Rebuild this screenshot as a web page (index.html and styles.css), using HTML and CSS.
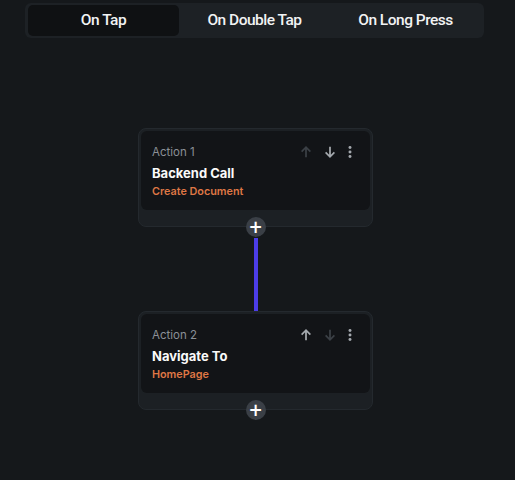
FILE: index.html
```html
<!DOCTYPE html>
<html lang="en">
<head>
    <meta charset="UTF-8">
    <meta name="viewport" content="width=device-width, initial-scale=1.0">
    <title>Action Flow</title>
    <link rel="stylesheet" href="styles.css">
</head>
<body>
    <div class="page">
        <div class="tabs">
            <div class="tab active">On Tap</div>
            <div class="tab">On Double Tap</div>
            <div class="tab">On Long Press</div>
        </div>

        <div class="flow">
            <div class="action">
                <div class="action-body">
                    <div class="action-head">
                        <span class="action-label">Action 1</span>
                        <div class="action-tools">
                            <svg class="tool dim" viewBox="0 0 16 16"><path d="M8 14V2.5M3 7.5 8 2.5l5 5"/></svg>
                            <svg class="tool" viewBox="0 0 16 16"><path d="M8 2V13.5M3 8.5 8 13.5l5-5"/></svg>
                            <svg class="tool dots" viewBox="0 0 16 16"><circle cx="8" cy="2.8" r="1.7"/><circle cx="8" cy="8" r="1.7"/><circle cx="8" cy="13.2" r="1.7"/></svg>
                        </div>
                    </div>
                    <div class="action-title">Backend Call</div>
                    <div class="action-sub">Create Document</div>
                </div>
                <div class="action-foot"></div>
                <button class="add-btn">+</button>
            </div>

            <div class="connector"></div>

            <div class="action">
                <div class="action-body">
                    <div class="action-head">
                        <span class="action-label">Action 2</span>
                        <div class="action-tools">
                            <svg class="tool" viewBox="0 0 16 16"><path d="M8 14V2.5M3 7.5 8 2.5l5 5"/></svg>
                            <svg class="tool dim" viewBox="0 0 16 16"><path d="M8 2V13.5M3 8.5 8 13.5l5-5"/></svg>
                            <svg class="tool dots" viewBox="0 0 16 16"><circle cx="8" cy="2.8" r="1.7"/><circle cx="8" cy="8" r="1.7"/><circle cx="8" cy="13.2" r="1.7"/></svg>
                        </div>
                    </div>
                    <div class="action-title">Navigate To</div>
                    <div class="action-sub">HomePage</div>
                </div>
                <div class="action-foot"></div>
                <button class="add-btn">+</button>
            </div>
        </div>
    </div>
</body>
</html>
```

FILE: styles.css
```css
html, body {
    margin: 0;
    background-color: #15181b;
}
body {
    font-family: Inter, "Noto Sans", sans-serif;
    color: #fff;
    height: 480px;
    overflow: hidden;
}
.page {
    width: 511px;
    padding-top: 3px;
}
.tabs {
    display: grid;
    grid-template-columns: 1fr 1fr 1fr;
    width: 453px;
    margin-left: 25px;
    padding: 2px 3px;
    background: #1d2125;
    border-radius: 6px;
}
.tab {
    height: 31px;
    line-height: 31px;
    text-align: center;
    font-family: Roboto, "Liberation Sans", sans-serif;
    font-weight: 500;
    font-size: 15.5px;
    letter-spacing: -0.5px;
    color: #f2f3f4;
    border-radius: 5px;
}
.tab.active {
    background: #0f1113;
}
.flow {
    display: flex;
    flex-direction: column;
    align-items: center;
    margin-top: 90px;
}
.action {
    position: relative;
    width: 233px;
    background: #1c2024;
    border: 1px solid #24292e;
    border-radius: 8px;
}
.action-body {
    margin: 2px 2px 0;
    height: 79px;
    padding: 0 0 0 11px;
    background: #121417;
    border-radius: 6px;
}
.action-head {
    display: flex;
    align-items: center;
    justify-content: space-between;
    height: 40px;
    padding-top: 2px;
    box-sizing: border-box;
}
.action-label {
    font-size: 11.5px;
    color: #8b9096;
}
.action-tools {
    display: flex;
    align-items: center;
    padding-right: 13px;
}
.tool {
    width: 14px;
    height: 14px;
    fill: none;
    stroke: #a4a9ae;
    stroke-width: 2;
}
.tool + .tool {
    margin-left: 10px;
}
.tool.dim {
    stroke: #3b4046;
}
.tool.dots {
    margin-left: 6px;
    fill: #a4a9ae;
    stroke: none;
}
.action-title {
    margin-top: -6px;
    font-size: 13px;
    font-weight: 700;
    color: #fafafa;
}
.action-sub {
    margin-top: 4px;
    font-size: 10.8px;
    font-weight: 600;
    color: #df7745;
}
.action-foot {
    height: 16px;
}
.add-btn {
    position: absolute;
    left: 50%;
    bottom: -11px;
    transform: translateX(-50%);
    width: 20px;
    height: 20px;
    padding: 0;
    border: none;
    border-radius: 50%;
    background: #3a3f46;
    color: #fff;
    font-family: "DejaVu Sans", sans-serif;
    font-size: 17px;
    font-weight: 700;
    line-height: 19px;
    text-align: center;
}
.connector {
    width: 4px;
    height: 73px;
    margin-top: 11px;
    background: #4c3de8;
}
```
